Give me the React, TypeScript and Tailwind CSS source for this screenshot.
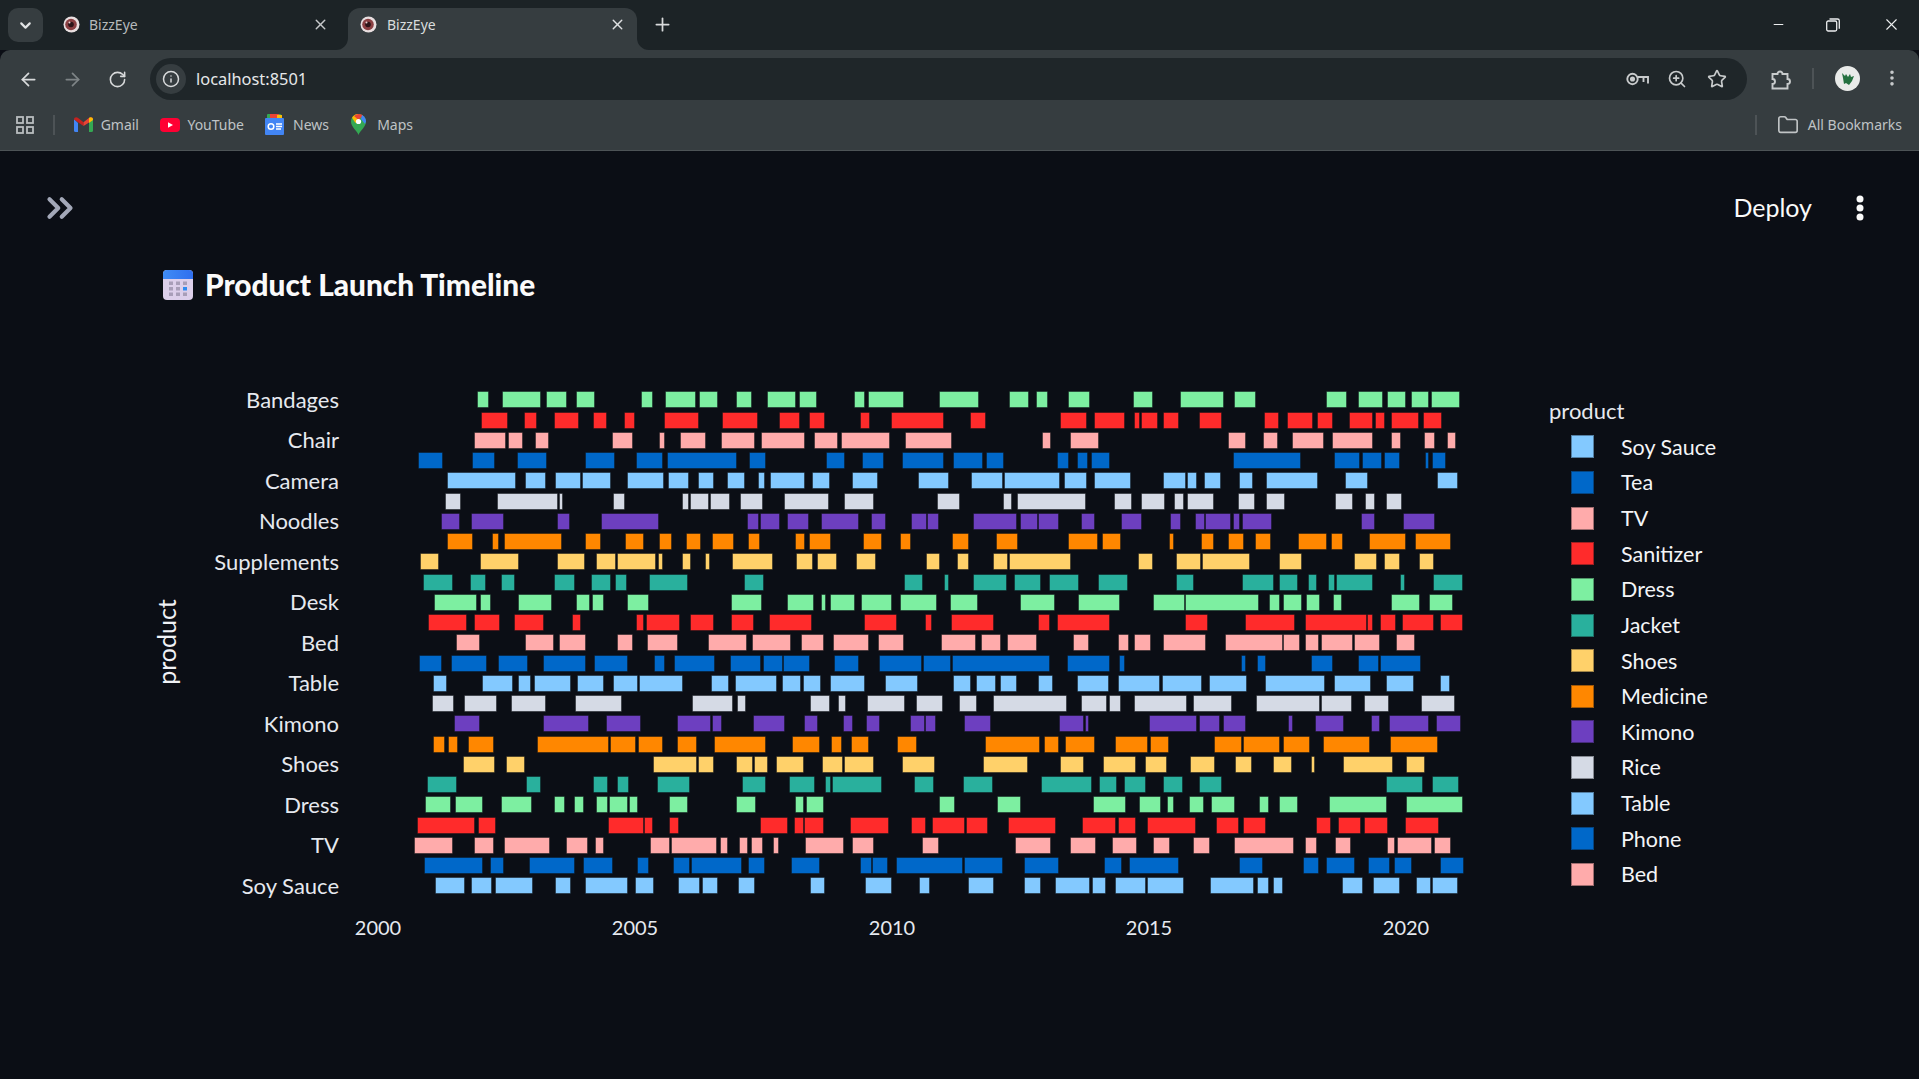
import React from "react";
import { ArrowLeft, ArrowRight, RotateCw, Info, ZoomIn, Star, MoreVertical, X, Plus, ChevronDown, ChevronsRight, Minus, Folder } from "lucide-react";

const COLORS = ["#7DEFA1","#FF2B2B","#FFABAB","#0068C9","#83C9FF","#D5DAE5","#6D3FC0","#FF8700","#FFD16A","#29B09D"];

const L: number[][] = [
[232,268,307,422,438,501,529,585,723,758,796,888,897,954,1009,1057,1101,1187,1196,1250,1362,1395,1404,1512],
[243,325,373,411,463,538,579,621,673,705,792,898,965,1074,1137,1200,1227,1274,1380,1409,1473,1560],
[222,318,325,368,404,446,636,698,778,794,841,917,964,1065,1083,1215,1242,1314,1324,1470,1515,1560],
[54,128,216,285,351,441,555,645,708,789,801,1011,1048,1098,1278,1335,1387,1451,1506,1560],
[141,348,376,438,465,544,546,632,682,791,804,867,894,941,982,1036,1075,1095,1110,1215,1237,1290,1356,1433,1555,1560],
[135,183,291,475,477,489,640,675,847,868,869,926,930,990,1021,1090,1152,1288,1333,1421],
[122,179,214,312,471,510,603,777,1040,1077,1080,1140,1161,1227,1263,1377,1412,1458,1534,1560],
[142,219,275,296,312,486,555,602,676,732,778,815,858,902,936,1001,1043,1080,1185,1215,1227,1293,1388,1446,1500,1533],
[59,117,239,356,471,555,587,648,652,767,775,789,845,873,915,930,995,1119,1188,1239,1252,1310,1368,1427],
[68,159,211,258,303,346,462,525,574,632,644,680,748,864,1032,1092,1513,1560],
[101,232,240,273,354,456,528,569,577,613,680,747,993,1085,1162,1242,1263,1279,1291,1364,1383,1475,1500,1560],
[85,201,222,301,343,433,516,543,708,731,738,840,870,942,994,1062,1107,1236,1392,1491],
[168,239,376,461,478,557,651,698,742,834,925,1041,1057,1173,1203,1272,1300,1408,1433,1511],
[57,126,152,261,294,384,428,559,582,684,761,796,822,945,991,1083,1089,1150,1150,1229,1301,1376,1437,1560],
[99,140,246,339,353,394,403,514,532,612,639,715,716,850,934,987,1005,1132,1147,1203,1208,1262,1289,1395,1456,1554],
[96,163,191,291,334,437,525,667,877,998,1011,1037,1231,1289,1314,1338,1400,1514,1547,1560],
[163,240,430,567,618,723,830,932,937,966,1059,1154,1213,1254,1330,1358,1399,1440,1531,1560],
[99,136,143,174,204,282,411,626,629,707,714,789,832,890,943,1098,1176,1259,1293,1326,1353,1406,1491,1552],
[188,285,317,374,758,891,893,941,1008,1060,1061,1104,1129,1212,1266,1330,1331,1423,1506,1560],
[81,170,377,424,579,623,651,688,771,871,1027,1098,1167,1244,1276,1293,1295,1447,1541,1560],
[76,154,166,248,303,396,462,495,523,552,588,625,626,685,688,714,807,863,1008,1067,1186,1212,1217,1273],
[51,226,233,288,623,731,732,758,808,836,1080,1164,1182,1211,1213,1272,1350,1467,1534,1560],
[43,158,222,282,313,450,498,563,586,613,751,811,812,951,961,984,1017,1044,1052,1088,1119,1137,1215,1332,1356,1422],
[72,249,271,312,387,525,550,639,711,748,819,869,872,1025,1045,1095,1173,1260,1381,1417,1417,1465,1487,1560],
[105,195,213,276,286,399,465,514,555,685,705,762,834,899,906,953,1013,1064,1230,1276,1395,1476,1556,1560],
];

const R: number[][] = [
[52,164,250,304,326,357,413,475,596,651,729,851,879,941,1137,1196,1226,1297,1308,1362,1375,1425,1431,1511],
[0,67,140,186,391,467,488,574,598,616,619,666,680,725,780,845,963,1004,1028,1100,1112,1156,1201,1268,1274,1301,1318,1397,1408,1461],
[0,90,342,366,421,501,863,913,959,1002,1041,1130,1154,1267,1318,1346,1411,1443,1475,1501],
[0,66,92,176,184,235,384,416,440,470,479,531,876,1066,1160,1232,1238,1294,1298,1344,1414,1425,1434,1473],
[0,81,144,233,234,391,403,467,488,591,680,744,748,775,795,843,894,932,970,1114,1190,1254,1448,1505],
[48,112,231,257,272,464,543,593,619,686,711,740,748,823,890,938,970,1023,1162,1212,1245,1274,1305,1350],
[0,20,20,54,148,272,281,330,331,389,451,491,564,621,700,731,770,798,798,871,877,895,901,986,1235,1273,1352,1441],
[90,137,213,275,413,497,509,563,697,711,788,823,861,907,937,982,1058,1140,1151,1183,1257,1360,1386,1486],
[17,56,103,137,205,247,248,423,610,652,717,788,789,923,1006,1070,1216,1280,1298,1343,1396,1440],
[0,7,68,81,149,243,263,338,361,444,498,582,717,767,902,991,1006,1058,1086,1112,1142,1162,1166,1268,1343,1358,1436,1520],
[0,47,85,162,281,377,442,560,653,741,742,948,978,1008,1016,1069,1081,1119,1155,1182,1320,1399,1426,1492],
[14,33,86,207,330,364,383,531,741,805,910,1050,1079,1251,1252,1268,1288,1332,1350,1439,1456,1519],
[60,157,170,226,244,328,427,472,553,585,599,646,680,801,854,1015,1016,1064,1078,1117,1123,1213,1214,1287,1334,1385],
[0,5,7,86,89,364,411,531,558,573,898,912,943,970,1094,1156,1226,1286,1288,1403],
[93,143,157,214,225,271,329,372,440,528,553,672,678,789,810,916,967,1134,1159,1263,1305,1382,1457,1485],
[0,64,109,160,205,411,452,523,528,564,600,747,765,873,942,1121,1122,1210,1244,1312,1404,1498],
[0,15,15,45,124,198,389,460,461,473,642,776,781,840,848,913,1029,1044,1107,1186,1262,1289,1312,1425,1444,1515],
[181,335,347,390,405,489,546,638,645,697,824,902,904,1007,1016,1092,1129,1261,1317,1450],
[0,43,175,302,391,459,513,605,631,692,757,826,881,929,988,1041,1094,1106,1185,1324,1362,1415],
[0,39,120,204,340,482,501,552,571,634,680,736,781,846,1305,1408,1433,1510],
[54,98,216,284,483,577,614,674,692,711,752,796,815,882,949,978,1004,1058,1146,1308,1361,1519],
[0,17,34,127,130,190,245,382,454,549,555,606,635,772,829,894,903,968,1108,1151,1170,1236,1243,1309,1358,1454],
[5,53,267,366,421,492,538,608,651,699,764,812,878,1046,1078,1111,1162,1207,1308,1330,1335,1433,1439,1488],
[0,119,122,232,291,390,514,566,586,726,893,959,1072,1118,1138,1219,1254,1316,1327,1377,1457,1524],
[0,27,134,208,291,339,379,476,482,522,546,634,635,739,811,935,944,976,987,1016,1182,1240,1269,1343,1388,1431,1434,1506],
];

function barsForRow(r: number): [number, number][] {
  const out: [number, number][] = [];
  const l = L[r];
  for (let i = 0; i < l.length; i += 2) out.push([400 + l[i] / 3, 400 + l[i + 1] / 3]);
  const q = R[r];
  for (let i = 0; i < q.length; i += 2) {
    const a = 920 + q[i] / 2.8;
    const b = 920 + q[i + 1] / 2.8;
    const last = out[out.length - 1];
    if (q[i] === 0 && last && last[1] >= 920) last[1] = b;
    else out.push([a, b]);
  }
  return out;
}

const YLABELS = ["Bandages","Chair","Camera","Noodles","Supplements","Desk","Bed","Table","Kimono","Shoes","Dress","TV","Soy Sauce"];
const XLABELS: [string, number][] = [["2000",378],["2005",635],["2010",892],["2015",1149],["2020",1406]];
const LEGEND: [string, string][] = [
  ["Soy Sauce","#83C9FF"],["Tea","#0068C9"],["TV","#FFABAB"],["Sanitizer","#FF2B2B"],["Dress","#7DEFA1"],["Jacket","#29B09D"],["Shoes","#FFD16A"],["Medicine","#FF8700"],["Kimono","#6D3FC0"],["Rice","#D5DAE5"],["Table","#83C9FF"],["Phone","#0068C9"],["Bed","#FFABAB"],
];
const FONT = "Lato, 'Noto Sans', sans-serif";

function Eye() {
  return (
    <svg width="17" height="17" viewBox="0 0 17 17" className="shrink-0">
      <circle cx="8.5" cy="8.5" r="8" fill="#e9dfe0" />
      <circle cx="8" cy="8.5" r="5.8" fill="#8a3f42" />
      <circle cx="8" cy="8.5" r="2.8" fill="#2c1418" />
      <circle cx="6.5" cy="6.5" r="1" fill="#e8d0d0" />
    </svg>
  );
}

function Tab({ active }: { active?: boolean }) {
  return (
    <div className={active ? "relative flex h-[42px] w-[289px] items-center rounded-t-[12px] bg-[#363d40] pl-[12px] pb-[9px]" : "flex h-[42px] w-[305px] items-center pl-[20px] pb-[9px]"}>
      <Eye />
      <span className={active ? "ml-[10px] text-[14px] text-[#d9dcdd]" : "ml-[9px] text-[14px] text-[#b6babb]"}>BizzEye</span>
      <X size={17} strokeWidth={2} className={active ? "ml-auto mr-[11px] text-[#dfe1e2]" : "ml-auto mr-[19px] text-[#c6c9ca]"} />
      {active && (
        <>
          <svg width="12" height="12" viewBox="0 0 12 12" className="absolute bottom-0 left-[-12px]"><path d="M12 0V12H0A12 12 0 0 0 12 0Z" fill="#363d40" /></svg>
          <svg width="12" height="12" viewBox="0 0 12 12" className="absolute bottom-0 right-[-12px]"><path d="M0 0V12H12A12 12 0 0 1 0 0Z" fill="#363d40" /></svg>
        </>
      )}
    </div>
  );
}

function Gmail() {
  return (
    <svg width="19" height="15" viewBox="0 0 19 15" className="shrink-0">
      <path d="M0 2v11.5A1.5 1.5 0 0 0 1.5 15H4V6z" fill="#4285F4" />
      <path d="M19 2v11.5a1.5 1.5 0 0 1-1.5 1.5H15V6z" fill="#34A853" />
      <path d="M0 2.5 C0 .5 2.200 -.5 3.800 .8 L9.500 5.200 L9.500 9 L4 5.200 L0 2.500z" fill="#C5221F" />
      <path d="M9.500 5.200 L15.200 .8 C16.800 -.5 19 .5 19 2.500 L15 5.500 L9.500 9z" fill="#EA4335" />
      <path d="M15 1v5l4-3V2.500C19 .5 16.800 -.5 15.200 .8z" fill="#FBBC04" />
    </svg>
  );
}
function YouTube() {
  return (
    <svg width="20" height="14" viewBox="0 0 20 14" className="shrink-0">
      <rect width="20" height="14" rx="4" fill="#FF0033" />
      <path d="M8 4.200 13 7 8 9.800z" fill="#fff" />
    </svg>
  );
}
function News() {
  return (
    <svg width="19" height="21" viewBox="0 0 19 21" className="shrink-0">
      <rect x="2" y="0" width="14" height="6" rx="1" fill="#34A853" />
      <rect x="5" y="0" width="9" height="4" fill="#EA4335" />
      <rect x="12" y="1" width="5" height="5" fill="#FBBC04" />
      <rect x="0" y="4" width="19" height="17" rx="1" fill="#4285F4" />
      <circle cx="6" cy="12.500" r="2.800" fill="none" stroke="#fff" strokeWidth="1.500" />
      <path d="M11 10h6M11 12.500h6M11 15h5" stroke="#fff" strokeWidth="1.400" />
    </svg>
  );
}
function MapsPin() {
  return (
    <svg width="15" height="21" viewBox="0 0 15 21" className="shrink-0">
      <path d="M7.500 21C6 16.500 0 13 0 7.500A7.500 7.500 0 0 1 15 7.500C15 13 9 16.500 7.500 21Z" fill="#34A853" />
      <path d="M1 3.800A7.500 7.500 0 0 1 7 0L7.500 5 4.500 9 1 3.800Z" fill="#FBBC04" />
      <path d="M3 2A7.500 7.500 0 0 1 12 1.500L7.500 6 3 2Z" fill="#EA4335" />
      <path d="M11 1A7.500 7.500 0 0 1 15 7.500L14 10 10 5Z" fill="#4285F4" />
      <circle cx="7.500" cy="7.500" r="2.600" fill="#fff" />
    </svg>
  );
}
function Bookmark({ icon, label, w }: { icon: React.ReactNode; label: string; w: string }) {
  return (
    <div className={"flex items-center " + w}>
      {icon}
      <span className="ml-auto text-[14px] text-[#bfc3c5]">{label}</span>
    </div>
  );
}

function CalendarIcon() {
  const dots = [0, 1, 2];
  return (
    <svg width="30" height="30" viewBox="0 0 30 30" className="shrink-0">
      <defs>
        <linearGradient id="calTop" x1="0" y1="0" x2="1" y2="0">
          <stop offset="0" stopColor="#3f8cf5" />
          <stop offset="1" stopColor="#2f6fef" />
        </linearGradient>
      </defs>
      <rect width="30" height="30" rx="4" fill="#dccfea" />
      <path d="M0 9V4a4 4 0 0 1 4-4h22a4 4 0 0 1 4 4v5z" fill="url(#calTop)" />
      {dots.map((r) =>
        [0, 1, 2].map((c) => (
          <rect key={r + "-" + c} x={6 + c * 7} y={11.5 + r * 5.5} width="4" height="3.5" fill={r === 1 && c === 2 ? "#2f8cf0" : "#a89eb8"} />
        ))
      )}
    </svg>
  );
}

function Chart() {
  return (
    <svg width="1350" height="570" viewBox="150 380 1350 570" className="shrink-0" style={{ fontFamily: FONT }}>
      <text x="166" y="642" fill="#f0f2f6" fontSize="25" textAnchor="middle" dominantBaseline="central" transform="rotate(-90 166 642)">product</text>
      {YLABELS.map((t, i) => (
        <text key={t} x="339" y={399 + i * 40.5} fill="#e6e9ef" fontSize="22" textAnchor="end" dominantBaseline="central">{t}</text>
      ))}
      {XLABELS.map(([t, x]) => (
        <text key={t} x={x} y="927" fill="#e6e9ef" fontSize="20" textAnchor="middle" dominantBaseline="central">{t}</text>
      ))}
      {L.map((_, r) =>
        barsForRow(r).map(([a, b], i) => {
          const x = Math.round(a);
          const w = Math.max(Math.round(b) - x, 2);
          const y = Math.round(391.3 + r * 20.25);
          return (
            <rect key={r + "-" + i} x={x + 0.5} y={y + 0.5} width={w - 1} height={16} fill={COLORS[r % 10]} stroke="#0e1117" strokeOpacity="0.45" strokeWidth="1" />
          );
        })
      )}
    </svg>
  );
}

export default function App() {
  return (
    <div className="flex h-[1079px] w-[1919px] flex-col overflow-hidden bg-[#0b0e15]" style={{ fontFamily: "'Noto Sans', sans-serif" }}>
      <div className="flex h-[50px] items-end bg-[#1c2326] pl-[8px]">
        <div className="mb-[8px] flex h-[34px] w-[35px] items-center justify-center rounded-[10px] bg-[#363d40]">
          <ChevronDown size={17} strokeWidth={3} className="text-[#e2e4e5]" />
        </div>
        <Tab />
        <Tab active />
        <Plus size={21} strokeWidth={2} className="mb-[15px] ml-[15px] text-[#d8dadb]" />
        <div className="ml-auto mb-[16px] flex items-center text-[#eceeef]">
          <Minus size={15} strokeWidth={1.6} className="mr-[40px]" />
          <svg width="14" height="14" viewBox="0 0 14 14" className="mr-[42px]" fill="none" stroke="currentColor" strokeWidth="1.300"><rect x="0.700" y="3" width="10" height="10" rx="1.500" /><path d="M3.500 1h8A1.800 1.800 0 0 1 13.300 2.800v8" /></svg>
          <X size={19} strokeWidth={1.4} className="mr-[18px]" />
        </div>
      </div>

      <div className="flex flex-col rounded-t-[10px] border-b border-[#4d5356] bg-[#363d40]">
        <div className="flex h-[58px] items-start pt-[8px] pl-[18px] text-[#d8dadb]">
          <div className="flex h-[42px] items-center">
            <ArrowLeft size={21} strokeWidth={2} />
            <ArrowRight size={21} strokeWidth={2} className="ml-[23px] text-[#7e8486]" />
            <RotateCw size={19} strokeWidth={2} className="ml-[25px]" />
          </div>
          <div className="ml-[23px] flex h-[42px] w-[1597px] items-center rounded-full bg-[#1f2629] pl-[6px] pr-[19px]">
            <div className="flex h-[30px] w-[30px] items-center justify-center rounded-full bg-[#363d40]">
              <Info size={18} strokeWidth={2} />
            </div>
            <span className="ml-[10px] text-[16.4px] text-[#e6e8e9]">localhost:8501</span>
            <svg width="23" height="14" viewBox="0 0 23 14" className="ml-auto mr-[18px]" fill="none" stroke="#c8cbcc" strokeWidth="1.900">
              <circle cx="6.500" cy="7" r="5.200" /><circle cx="6.500" cy="7" r="1.600" fill="#c8cbcc" /><path d="M11.700 5H22v6.500M17.500 5v5" />
            </svg>
            <ZoomIn size={20} strokeWidth={2} className="mr-[20px] text-[#c8cbcc]" />
            <Star size={20} strokeWidth={2} className="mr-[1px] text-[#c8cbcc]" />
          </div>
          <svg width="21" height="21" viewBox="0 0 21 21" className="ml-[24px] mt-[11px] text-[#c8cbcc]" fill="none" stroke="currentColor" strokeWidth="1.900">
            <path d="M1.500 5h5a2.500 2.500 0 1 1 5 0h5v5a2.500 2.500 0 1 1 0 5v4.500h-15v-4.500a2.500 2.500 0 1 0 0-5V5z" />
          </svg>
          <div className="ml-[20px] mt-[10px] h-[21px] w-[2px] bg-[#4d5356]" />
          <svg width="25" height="25" viewBox="0 0 25 25" className="ml-[21px] mt-[8px]">
            <circle cx="12.500" cy="12.500" r="12.500" fill="#e9ebe9" />
            <path d="M7 7l3 3 1-2 2 3 2-3 1 3 3-1-2 5-3 4-3-2-2 1-1-6z" fill="#24703f" />
          </svg>
          <MoreVertical size={20} strokeWidth={2.300} className="ml-[22px] mt-[10px] text-[#c8cbcc]" />
        </div>
        <div className="flex h-[42px] items-start pl-[16px] pr-[17px]">
          <div className="flex h-[33px] w-full items-center">
            <svg width="18" height="18" viewBox="0 0 18 18" fill="none" stroke="#b9bdbf" strokeWidth="1.800" className="shrink-0">
              <rect x="1" y="1" width="6" height="6" /><rect x="11" y="1" width="6" height="6" /><rect x="1" y="11" width="6" height="6" /><rect x="11" y="11" width="6" height="6" />
            </svg>
            <div className="ml-[19px] h-[20px] w-[2px] bg-[#4d5356]" />
            <Bookmark icon={<Gmail />} label="Gmail" w="ml-[19px] w-[65px]" />
            <Bookmark icon={<YouTube />} label="YouTube" w="ml-[21px] w-[84px]" />
            <Bookmark icon={<News />} label="News" w="ml-[21px] w-[64px]" />
            <Bookmark icon={<MapsPin />} label="Maps" w="ml-[22px] w-[62px]" />
            <div className="ml-auto h-[20px] w-[2px] bg-[#4d5356]" />
            <Folder size={22} strokeWidth={1.800} className="ml-[20px] text-[#c0c4c5]" />
            <span className="ml-[9px] text-[14px] text-[#bfc3c5]">All Bookmarks</span>
          </div>
        </div>
      </div>

      <div className="flex grow flex-col" style={{ fontFamily: FONT }}>
        <div className="flex h-[113px] items-center pl-[39px] pr-[54px]">
          <ChevronsRight size={42} strokeWidth={2.400} className="text-[#a3a8b8]" />
          <span className="ml-auto text-[25px] text-[#fafafa]">Deploy</span>
          <svg width="10" height="26" viewBox="0 0 10 26" className="ml-[43px]" fill="#fafafa">
            <circle cx="5" cy="4" r="3.500" /><circle cx="5" cy="13" r="3.500" /><circle cx="5" cy="22" r="3.500" />
          </svg>
        </div>
        <div className="flex h-[42px] items-center pl-[163px]">
          <CalendarIcon />
          <h1 className="ml-[12px] text-[29.8px] font-black text-[#fafafa]">Product Launch Timeline</h1>
        </div>
        <div className="mt-[74px] flex pl-[150px]">
          <Chart />
          <div className="ml-[49px] flex flex-col pt-[18px]">
            <div className="h-[31px] text-[22px] leading-[26px] text-[#e6e9ef]">product</div>
            {LEGEND.map(([t, c]) => (
              <div key={t} className="flex h-[35.650px] items-center pl-[22px]">
                <div className="h-[23px] w-[23px] border border-[#0e1117]/40" style={{ backgroundColor: c }} />
                <span className="ml-[27px] text-[21.5px] text-[#f4f5f7]">{t}</span>
              </div>
            ))}
          </div>
        </div>
      </div>
    </div>
  );
}
